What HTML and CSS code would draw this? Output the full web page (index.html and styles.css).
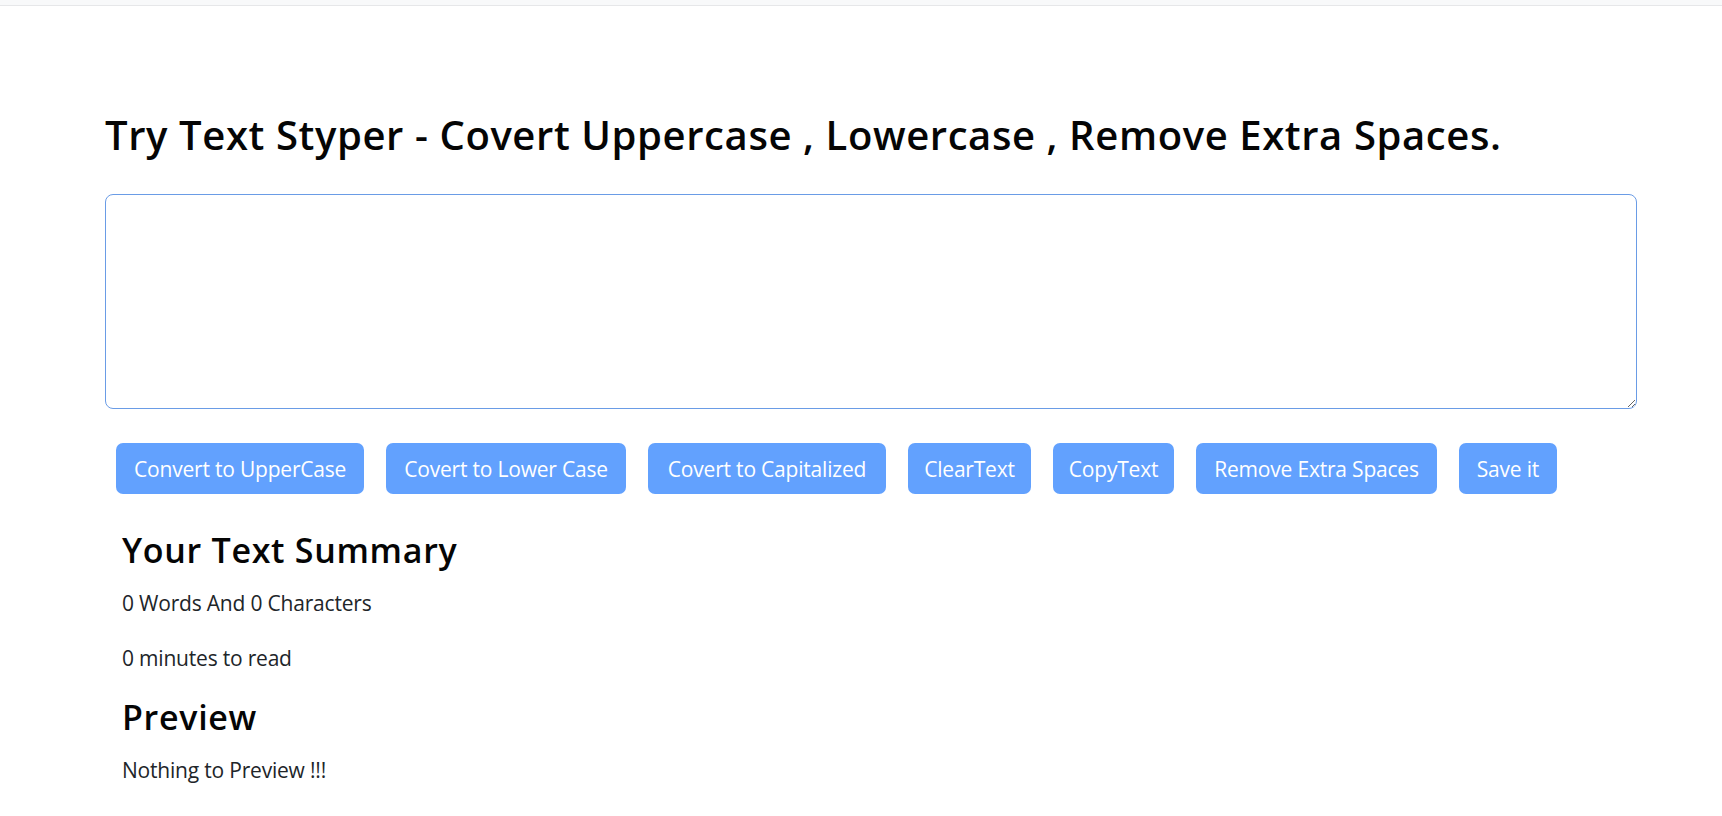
FILE: index.html
```html
<!DOCTYPE html>
<html lang="en">
<head>
<meta charset="utf-8">
<title>Text Styper</title>
<link rel="stylesheet" href="styles.css">
</head>
<body>
<div class="topbar"></div>
<main class="page">
  <h1 class="title">Try Text Styper - Covert Uppercase , Lowercase , Remove Extra Spaces.</h1>
  <textarea class="editor" rows="8"></textarea>
  <div class="actions">
    <button class="btn" disabled>Convert to UpperCase</button>
    <button class="btn" disabled>Covert to Lower Case</button>
    <button class="btn btn-wide" disabled>Covert to Capitalized</button>
    <button class="btn btn-narrow" disabled>ClearText</button>
    <button class="btn btn-narrow" disabled>CopyText</button>
    <button class="btn" disabled>Remove Extra Spaces</button>
    <button class="btn" disabled>Save it</button>
  </div>
  <section class="summary">
    <h2 class="sub">Your Text Summary</h2>
    <p class="line">0 Words And 0 Characters</p>
    <p class="line">0 minutes to read</p>
    <h2 class="sub">Preview</h2>
    <p class="line">Nothing to Preview !!!</p>
  </section>
</main>
</body>
</html>
```
FILE: styles.css
```css
* { box-sizing: border-box; }
html, body { margin: 0; padding: 0; background: #fff; }
body {
  font-family: "Open Sans", "Noto Sans", sans-serif;
  color: #212529;
  width: 1722px;
  height: 816px;
  overflow: hidden;
}
.topbar {
  height: 6px;
  background: #f8f9fa;
  border-bottom: 1px solid #e6e7e9;
}
.page {
  width: 1532px;
  margin-left: 105px;
  padding-top: 105px;
}
.title {
  margin: 0 0 35px 0;
  font-size: 40px;
  font-weight: 600;
  line-height: 48px;
  color: #050505;
  letter-spacing: 0.6px;
}
.editor {
  display: block;
  width: 1532px;
  height: 215px;
  border: 1px solid #6a9ce6;
  border-radius: 8px;
  padding: 8px 13px;
  font: inherit;
  outline: none;
  resize: vertical;
}
.actions {
  display: flex;
  gap: 22px;
  margin: 34px 0 0 11px;
}
.btn {
  height: 51px;
  padding: 0 18px;
  border: none;
  border-radius: 7px;
  background: #62a1fe;
  color: #fff;
  font-family: inherit;
  font-size: 21px;
  letter-spacing: -0.2px;
}
.btn-wide {
  padding: 0 20px;
}
.btn-narrow {
  padding: 0 16px;
}
.summary {
  padding-left: 17px;
  padding-top: 36px;
}
.sub {
  margin: 0 0 17px 0;
  font-size: 34px;
  font-weight: 600;
  line-height: 41px;
  color: #050505;
  letter-spacing: 0.7px;
}
.line {
  margin: 0 0 23px 0;
  font-size: 21px;
  line-height: 31.5px;
  letter-spacing: -0.2px;
}
.line + .sub {
  margin-top: 2px;
}
```
